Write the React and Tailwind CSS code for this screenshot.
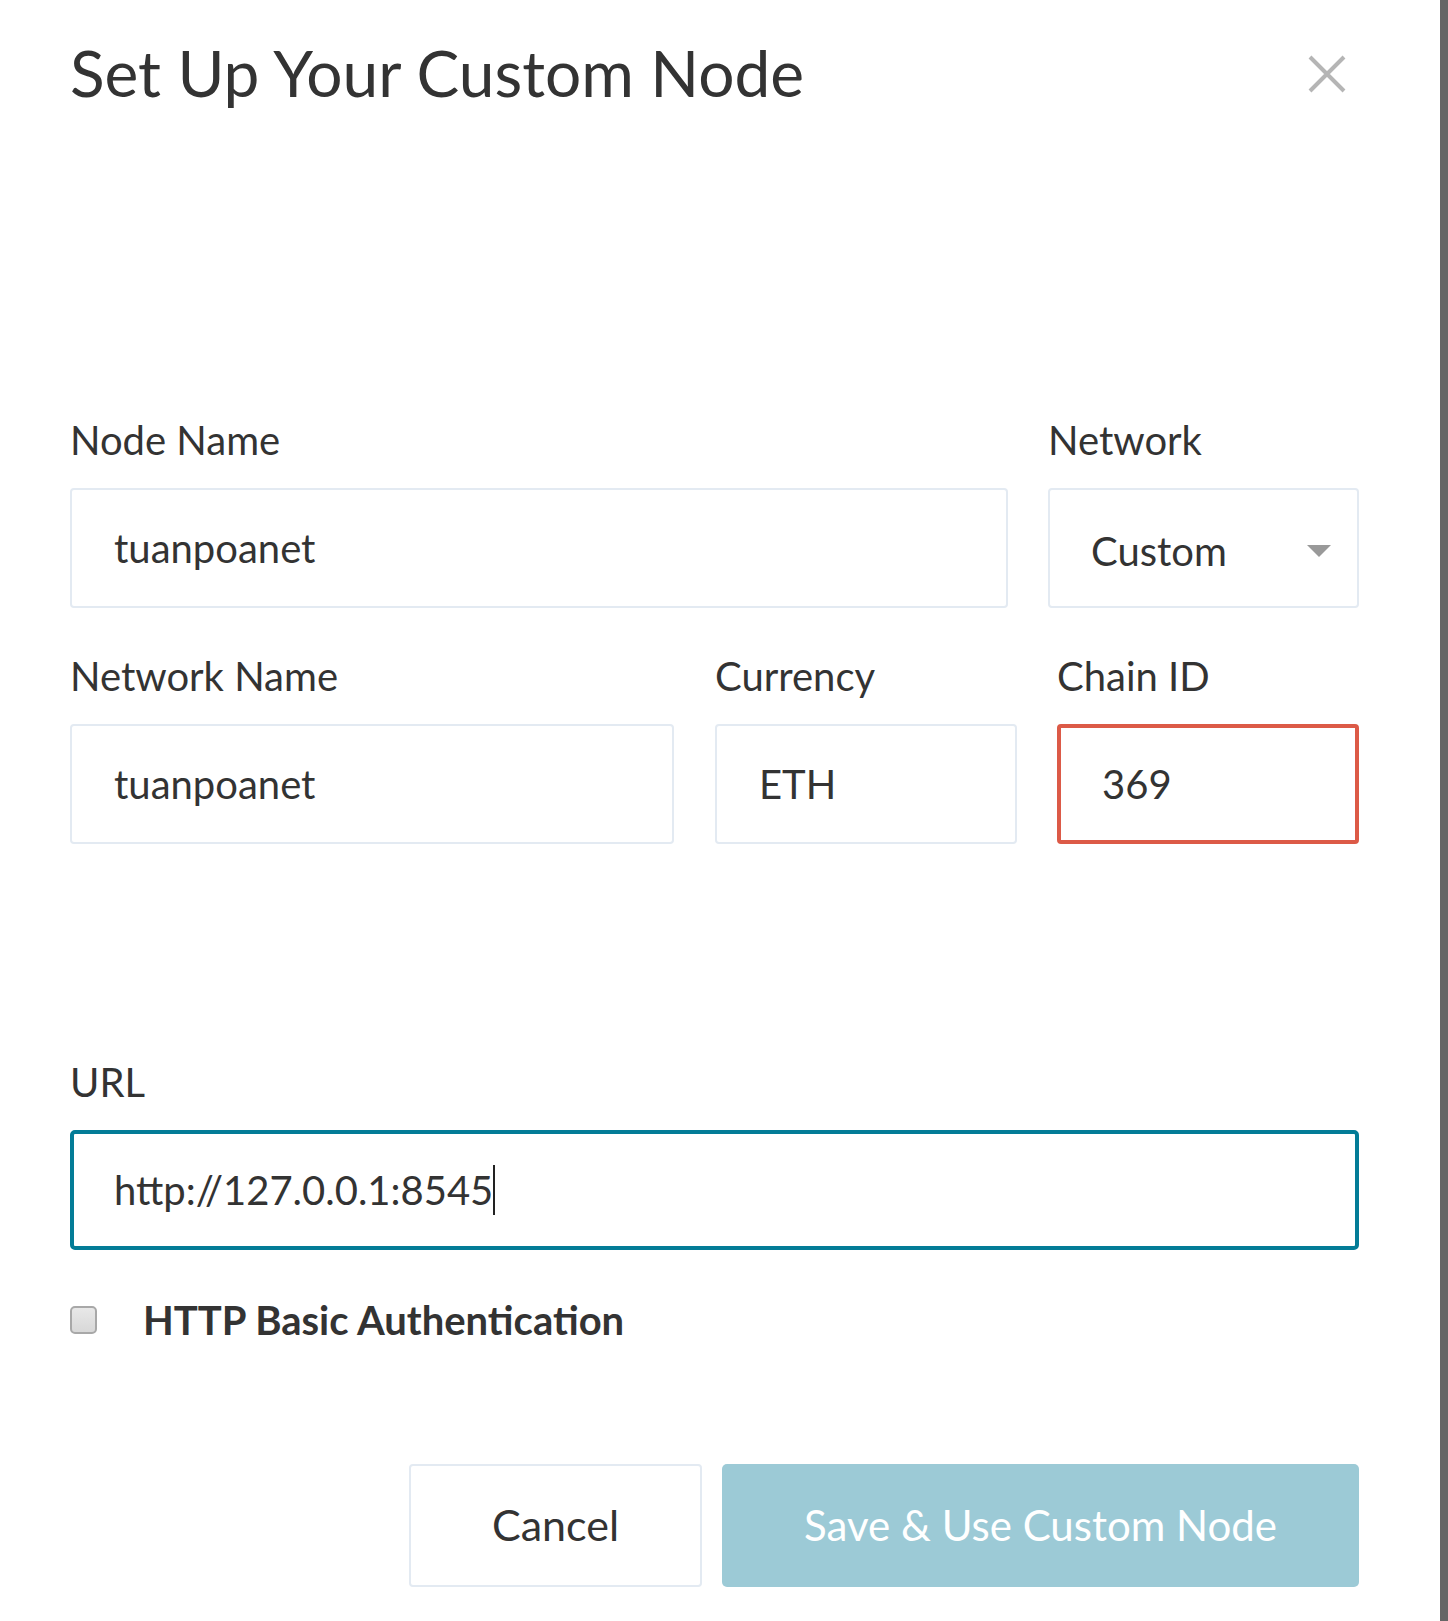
import { useState } from 'react';

function Field({ label, className = '', children }) {
  return (
    <div className={`flex flex-col ${className}`}>
      <label className="text-[40px] leading-[1.2] text-[#333]">{label}</label>
      <div className="mt-[24px]">{children}</div>
    </div>
  );
}

export default function App() {
  const [form, setForm] = useState({
    nodeName: 'tuanpoanet',
    networkName: 'tuanpoanet',
    currency: 'ETH',
    chainId: '369',
  });

  function handleChange(e) {
    setForm((prev) => ({ ...prev, [e.target.name]: e.target.value }));
  }

  return (
    <div className="flex min-h-[1621px] w-[1448px] bg-white font-['Lato',sans-serif] text-[#333]">
      <div className="w-[1440px] pl-[70px] pr-[81px] pt-[35px]">
        <div className="flex items-start justify-between">
          <h1 className="text-[64px] leading-[1.2] font-normal text-[#333]">Set Up Your Custom Node</h1>
          <button className="mr-[12px] mt-[19px] h-[40px] w-[40px]" type="button" aria-label="Close">
            <svg viewBox="0 0 40 40" className="h-[40px] w-[40px]">
              <path d="M3 3 L37 37 M37 3 L3 37" stroke="#b5b5b5" strokeWidth="4" fill="none" />
            </svg>
          </button>
        </div>

        <div className="mt-[304px] flex gap-[40px]">
          <Field label="Node Name" className="w-[938px]">
            <input
              className="block h-[120px] w-full rounded-[4px] border-2 border-[#e3eaf2] bg-white pl-[42px] text-[40px] text-[#333] outline-none"
              name="nodeName"
              value={form.nodeName}
              onChange={handleChange}
            />
          </Field>
          <Field label="Network" className="w-[311px]">
            <div className="flex h-[120px] w-full items-center justify-between rounded-[4px] border-2 border-[#e3eaf2] bg-white pl-[41px] pr-[26px] text-[40px] text-[#333]">
              <span className="mt-[6px]">Custom</span>
              <svg viewBox="0 0 24 12" className="mt-[6px] h-[12px] w-[24px]">
                <path d="M0 0 L24 0 L12 12 Z" fill="#999" />
              </svg>
            </div>
          </Field>
        </div>

        <div className="mt-[44px] flex">
          <Field label="Network Name" className="w-[604px]">
            <input
              className="block h-[120px] w-full rounded-[4px] border-2 border-[#e3eaf2] bg-white pl-[42px] text-[40px] text-[#333] outline-none"
              name="networkName"
              value={form.networkName}
              onChange={handleChange}
            />
          </Field>
          <Field label="Currency" className="ml-[41px] w-[302px]">
            <input
              className="block h-[120px] w-full rounded-[4px] border-2 border-[#e3eaf2] bg-white pl-[42px] text-[40px] text-[#333] outline-none"
              name="currency"
              value={form.currency}
              onChange={handleChange}
            />
          </Field>
          <Field label="Chain ID" className="ml-[40px] w-[302px]">
            <input
              className="block h-[120px] w-full rounded-[4px] border-[4px] border-[#dc5a47] bg-white pl-[41px] text-[40px] text-[#333] outline-none"
              name="chainId"
              value={form.chainId}
              onChange={handleChange}
            />
          </Field>
        </div>

        <div className="mt-[214px] flex flex-col">
          <label className="text-[40px] leading-[1.2] text-[#333]">URL</label>
          <div className="mt-[24px] flex h-[120px] w-full items-center rounded-[5px] border-[4px] border-[#037c97] bg-white pl-[40px] text-[40px] text-[#333]">
            <span>http://127.0.0.1:8545</span>
            <span className="inline-block h-[50px] w-[2px] bg-[#222]" />
          </div>
        </div>

        <div className="mt-[46px] flex items-center">
          <div className="h-[28px] w-[27px] rounded-[5px] border-2 border-[#a8a8a8] bg-gradient-to-b from-[#e8e8e8] to-[#d8d8d8]" />
          <span className="ml-[46px] text-[40px] leading-[1.2] font-bold text-[#333]">HTTP Basic Authentication</span>
        </div>

        <div className="mt-[120px] flex justify-end gap-[20px]">
          <button
            className="h-[123px] w-[293px] rounded-[4px] border-2 border-[#e3eaf2] bg-white text-[43px] text-[#333]"
            type="button"
          >
            Cancel
          </button>
          <button
            className="h-[123px] w-[637px] rounded-[5px] bg-[#9ccad6] text-[42px] text-white"
            type="button"
          >
            Save &amp; Use Custom Node
          </button>
        </div>
      </div>
      <div className="w-[8px] bg-[#666]" />
    </div>
  );
}
